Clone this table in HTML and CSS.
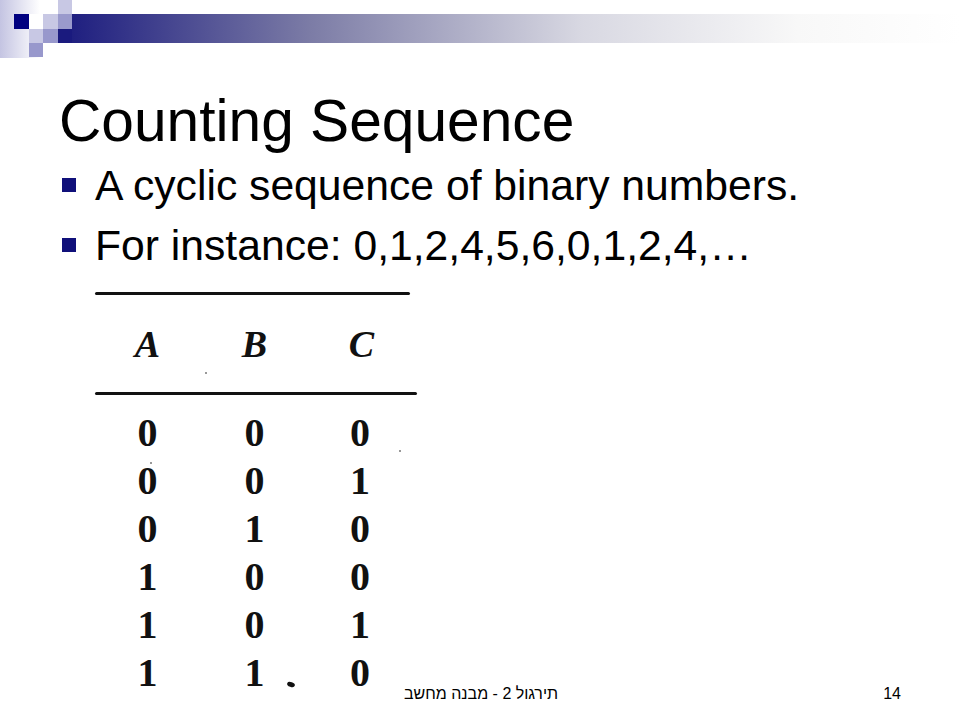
FILE: index.html
```html
<!DOCTYPE html>
<html lang="en">
<head>
<meta charset="utf-8">
<title>Counting Sequence</title>
<link rel="stylesheet" href="styles.css">
</head>
<body>
<div class="slide">
  <header class="banner">
    <svg class="banner-art" width="960" height="58" viewBox="0 0 960 58" aria-hidden="true">
      <defs>
        <linearGradient id="fade" x1="0" y1="0" x2="1" y2="0">
          <stop offset="0" stop-color="#c4c4e2"/>
          <stop offset="1" stop-color="#ffffff"/>
        </linearGradient>
        <linearGradient id="bar" x1="58" y1="0" x2="960" y2="0" gradientUnits="userSpaceOnUse">
          <stop offset="0" stop-color="#1a1a7e"/>
          <stop offset="0.28" stop-color="#7c7ca6"/>
          <stop offset="0.58" stop-color="#d8d8e2"/>
          <stop offset="0.82" stop-color="#f8f8f8"/>
          <stop offset="1" stop-color="#ffffff"/>
        </linearGradient>
      </defs>
      <rect x="0" y="0" width="40" height="58" fill="url(#fade)"/>
      <rect x="58" y="0" width="14" height="14" fill="#c8c8e4"/>
      <rect x="14" y="14" width="15" height="15" fill="#000080"/>
      <rect x="29" y="14" width="14" height="15" fill="#ffffff"/>
      <rect x="43" y="14" width="15" height="15" fill="#c8c8e4"/>
      <rect x="58" y="14" width="14" height="15" fill="#9a9acc"/>
      <rect x="72" y="14" width="888" height="29" fill="url(#bar)"/>
      <rect x="58" y="29" width="14" height="14" fill="#1a1a7e"/>
      <rect x="29" y="29" width="14" height="14" fill="#c8c8e4"/>
      <rect x="43" y="29" width="15" height="14" fill="#9898cc"/>
      <rect x="29" y="43" width="14" height="14" fill="#9898cc"/>
    </svg>
  </header>

  <h1 class="title">Counting Sequence</h1>

  <ul class="bullets">
    <li class="bullet">A cyclic sequence of binary numbers.</li>
    <li class="bullet">For instance: 0,1,2,4,5,6,0,1,2,4,…</li>
  </ul>

  <div class="scan">
    <div class="rule rule-top"></div>
    <div class="grid head">
      <span>A</span><span>B</span><span>C</span>
    </div>
    <div class="rule rule-mid"></div>
    <div class="grid body">
      <span>0</span><span>0</span><span>0</span>
      <span>0</span><span>0</span><span>1</span>
      <span>0</span><span>1</span><span>0</span>
      <span>1</span><span>0</span><span>0</span>
      <span>1</span><span>0</span><span>1</span>
      <span>1</span><span>1</span><span>0</span>
    </div>
    <span class="speck speck-1"></span>
    <span class="speck speck-2"></span>
    <span class="speck speck-3"></span>
    <span class="blot"></span>
  </div>

  <footer class="footer">
    <span class="footer-title" dir="rtl">תירגול 2 - מבנה מחשב</span>
    <span class="page-num">14</span>
  </footer>
</div>
</body>
</html>
```

FILE: styles.css
```css
* { box-sizing: border-box; }

html, body {
  margin: 0;
  padding: 0;
  background: #ffffff;
}

.slide {
  width: 960px;
  height: 720px;
  position: relative;
  overflow: hidden;
  background: #ffffff;
  font-family: "Liberation Sans", Arial, sans-serif;
  color: #000000;
  display: flex;
  flex-direction: column;
}

.banner {
  height: 58px;
  flex: none;
}

.banner-art {
  display: block;
}

.title {
  margin: 29px 0 0 59px;
  font-weight: normal;
  font-size: 58.67px;
  line-height: 68px;
  letter-spacing: 0;
}

.bullets {
  list-style: none;
  margin: 0;
  padding: 0 0 0 62px;
}

.bullet {
  display: flex;
  align-items: center;
  gap: 19px;
  font-size: 42.67px;
  line-height: 60px;
  margin-top: 0;
}

.bullet::before {
  content: "";
  width: 14px;
  height: 14px;
  background: #10107a;
  flex: none;
}

.scan {
  position: relative;
  margin: 17px 0 0 92px;
  width: 326px;
  font-family: "Liberation Serif", "Times New Roman", serif;
  font-weight: bold;
  color: #111111;
}

.rule {
  height: 3px;
  background: #111111;
  border-radius: 2px;
  margin-left: 3px;
}

.rule-top { width: 315px; }
.rule-mid { width: 322px; }

.grid {
  display: grid;
  grid-template-columns: 107px 107px 107px;
  justify-items: center;
}

.head {
  height: 97px;
  align-items: center;
  font-style: italic;
  font-size: 38px;
  padding-left: 2px;
}

.body {
  margin-top: 14px;
  font-size: 40px;
  line-height: 48px;
  grid-template-columns: 107px 107px 104px;
  padding-left: 2px;
}

.speck {
  position: absolute;
  width: 2px;
  height: 2px;
  border-radius: 50%;
  background: #777777;
}

.speck-1 { left: 113px; top: 80px; }
.speck-2 { left: 58px; top: 170px; }
.speck-3 { left: 307px; top: 158px; }

.blot {
  position: absolute;
  left: 195px;
  top: 390px;
  width: 8px;
  height: 5px;
  border-radius: 50%;
  background: #111111;
  transform: rotate(20deg);
}

.footer {
  position: absolute;
  left: 0;
  right: 0;
  bottom: 17px;
  display: flex;
  align-items: baseline;
  font-family: "Liberation Sans", Arial, sans-serif;
  font-size: 16px;
}

.footer-title {
  margin-left: 404px;
}

.page-num {
  margin-left: auto;
  margin-right: 59px;
}
```
